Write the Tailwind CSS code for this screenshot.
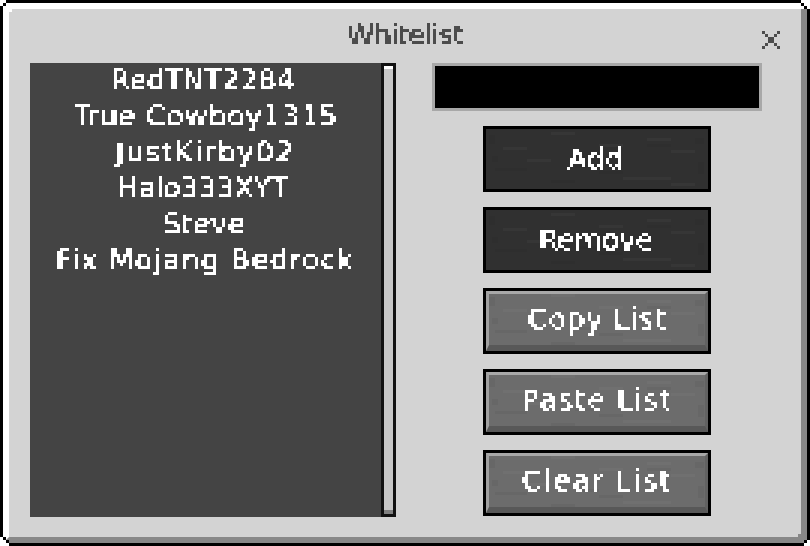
<!doctype html>
<html>
<head>
<meta charset="utf-8">
<script src="https://cdn.jsdelivr.net/npm/@tailwindcss/browser@4"></script>
</head>
<body class="bg-white overflow-hidden">
<!-- blocky 3px look for the text, stone texture for the buttons -->
<svg class="absolute w-0 h-0">
    <defs>
        <filter id="px" x="0" y="0" width="1" height="1" color-interpolation-filters="sRGB">
            <feFlood x="1" y="1" width="1" height="1" flood-color="#000"/>
            <feComposite width="3" height="3"/>
            <feTile result="grid"/>
            <feGaussianBlur in="SourceGraphic" stdDeviation="0.8" result="soft"/>
            <feComposite in="soft" in2="grid" operator="in"/>
            <feMorphology operator="dilate" radius="1"/>
            <feComponentTransfer>
                <feFuncA type="discrete" tableValues="0 0 1 1 1"/>
            </feComponentTransfer>
        </filter>
        <symbol id="stone" viewBox="0 0 222 60">
            <g fill="#fff" fill-opacity="0.03">
                <rect x="161" y="9" width="24" height="3"/>
                <rect x="41" y="30" width="24" height="3"/>
                <rect x="65" y="3" width="24" height="3"/>
                <rect x="137" y="48" width="48" height="3"/>
                <rect x="185" y="21" width="24" height="3"/>
                <rect x="113" y="15" width="24" height="3"/>
                <rect x="17" y="18" width="24" height="3"/>
                <rect x="185" y="54" width="24" height="3"/>
            </g>
            <g fill="#000" fill-opacity="0.04">
                <rect x="65" y="51" width="24" height="3"/>
                <rect x="9" y="39" width="32" height="3"/>
                <rect x="161" y="15" width="24" height="3"/>
                <rect x="89" y="36" width="24" height="3"/>
                <rect x="209" y="9" width="9" height="6"/>
                <rect x="212" y="33" width="6" height="12"/>
                <rect x="3" y="6" width="6" height="9"/>
                <rect x="6" y="27" width="6" height="6"/>
                <rect x="113" y="42" width="24" height="3"/>
            </g>
        </symbol>
    </defs>
</svg>

<div class="relative w-[810px] h-[546px] border-3 border-black font-['DejaVu_Sans',sans-serif]">
    <div class="flex flex-col w-full h-full border-t-6 border-l-6 border-t-white border-l-white border-b-6 border-r-6 border-b-[#888888] border-r-[#888888] bg-[#d3d3d3]">
        <div class="relative h-[54px] shrink-0">
            <h1 class="absolute left-[337px] top-[8px] text-[29px] leading-[36px] tracking-[-1.1px] text-[#4c4c4c] [filter:url(#px)]">Whitelist</h1>
            <svg class="absolute left-[753px] top-[22px]" width="18" height="18" viewBox="0 0 6 6" fill="#4c4c4c" shape-rendering="crispEdges">
                <path d="M0 0h1v1H0zM5 0h1v1H5zM1 1h1v1H1zM4 1h1v1H4zM2 2h2v2H2zM1 4h1v1H1zM4 4h1v1H4zM0 5h1v1H0zM5 5h1v1H5z"/>
            </svg>
        </div>

        <div class="flex pl-[21px]">
            <div class="flex w-[366px] h-[454px] bg-[#444444]">
                <ul class="flex-1 text-center text-white text-[29px] leading-[36px] -mt-px">
                    <li class="[filter:url(#px)] tracking-[-0.2px] pr-[6px]">RedTNT2284</li>
                    <li class="[filter:url(#px)] tracking-[0.3px]">True Cowboy1315</li>
                    <li class="[filter:url(#px)] tracking-[1.3px]">JustKirby02</li>
                    <li class="[filter:url(#px)] tracking-[-0.5px] pr-[6px]">Halo333XYT</li>
                    <li class="[filter:url(#px)] pr-[3px]">Steve</li>
                    <li class="[filter:url(#px)] tracking-[1px]">Fix Mojang Bedrock</li>
                </ul>
                <div class="flex flex-col w-[15px] h-full border-3 border-[#111111] bg-[#c6c6c6]">
                    <div class="h-[3px] bg-white"></div>
                    <div class="flex-1"></div>
                    <div class="h-[4px] bg-[#808080]"></div>
                </div>
            </div>

            <div class="flex flex-col items-center w-[330px] ml-[36px]">
                <div class="w-full h-[48px] border-3 border-[#a8a8a8] bg-black"></div>
                <div class="flex flex-col gap-[15px] mt-[15px]">
                    <button class="relative w-[228px] h-[66px] border-3 border-black text-[29px] text-white bg-[#303030]">
                        <svg class="absolute inset-0 w-full h-full" shape-rendering="crispEdges"><use href="#stone"/></svg>
                        <span class="relative block leading-[50px] pr-[3px] [filter:url(#px)]">Add</span>
                    </button>
                    <button class="relative w-[228px] h-[66px] border-3 border-black text-[29px] text-white bg-[#303030]">
                        <svg class="absolute inset-0 w-full h-full" shape-rendering="crispEdges"><use href="#stone"/></svg>
                        <span class="relative block leading-[50px] tracking-[-0.6px] pr-[3px] [filter:url(#px)]">Remove</span>
                    </button>
                    <button class="relative w-[228px] h-[66px] border-3 border-black text-[29px] text-white bg-[#6c6c6c]">
                        <svg class="absolute inset-0 w-full h-full" shape-rendering="crispEdges"><use href="#stone"/></svg>
                        <span class="relative block h-full border-t-3 border-l-3 border-r-3 border-b-6 border-t-[#a8a8a8] border-l-[#a0a0a0] border-r-[#626262] border-b-[#585858]">
                            <span class="block leading-[51px] tracking-[0.6px] [filter:url(#px)]">Copy List</span>
                        </span>
                    </button>
                    <button class="relative w-[228px] h-[66px] border-3 border-black text-[29px] text-white bg-[#6c6c6c]">
                        <svg class="absolute inset-0 w-full h-full" shape-rendering="crispEdges"><use href="#stone"/></svg>
                        <span class="relative block h-full border-t-3 border-l-3 border-r-3 border-b-6 border-t-[#a8a8a8] border-l-[#a0a0a0] border-r-[#626262] border-b-[#585858]">
                            <span class="block leading-[51px] tracking-[1.3px] [filter:url(#px)]">Paste List</span>
                        </span>
                    </button>
                    <button class="relative w-[228px] h-[66px] border-3 border-black text-[29px] text-white bg-[#6c6c6c]">
                        <svg class="absolute inset-0 w-full h-full" shape-rendering="crispEdges"><use href="#stone"/></svg>
                        <span class="relative block h-full border-t-3 border-l-3 border-r-3 border-b-6 border-t-[#a8a8a8] border-l-[#a0a0a0] border-r-[#626262] border-b-[#585858]">
                            <span class="block leading-[51px] tracking-[1.4px] [filter:url(#px)]">Clear List</span>
                        </span>
                    </button>
                </div>
            </div>
        </div>
    </div>

    <!-- stepped window corners -->
    <div class="absolute -left-[3px] -top-[3px] w-[6px] h-[3px] bg-white"></div>
    <div class="absolute -left-[3px] -top-[3px] w-[3px] h-[6px] bg-white"></div>
    <div class="absolute left-0 top-0 w-[3px] h-[3px] bg-black"></div>
    <div class="absolute left-[6px] top-[6px] w-[3px] h-[3px] bg-white"></div>

    <div class="absolute -right-[3px] -top-[3px] w-[9px] h-[3px] bg-white"></div>
    <div class="absolute -right-[3px] top-0 w-[6px] h-[3px] bg-white"></div>
    <div class="absolute -right-[3px] top-[3px] w-[3px] h-[3px] bg-white"></div>
    <div class="absolute right-[3px] top-0 w-[3px] h-[3px] bg-black"></div>
    <div class="absolute right-0 top-[3px] w-[3px] h-[3px] bg-black"></div>
    <div class="absolute right-[3px] top-[3px] w-[3px] h-[3px] bg-white"></div>

    <div class="absolute -left-[3px] -bottom-[3px] w-[9px] h-[3px] bg-white"></div>
    <div class="absolute -left-[3px] bottom-0 w-[6px] h-[3px] bg-white"></div>
    <div class="absolute -left-[3px] bottom-[3px] w-[3px] h-[3px] bg-white"></div>
    <div class="absolute left-[3px] bottom-0 w-[3px] h-[3px] bg-black"></div>
    <div class="absolute left-0 bottom-[3px] w-[3px] h-[3px] bg-black"></div>

    <div class="absolute -right-[3px] -bottom-[3px] w-[6px] h-[3px] bg-white"></div>
    <div class="absolute -right-[3px] -bottom-[3px] w-[3px] h-[6px] bg-white"></div>
    <div class="absolute right-0 bottom-0 w-[3px] h-[3px] bg-black"></div>
    <div class="absolute right-[6px] bottom-[6px] w-[3px] h-[3px] bg-[#888888]"></div>
</div>
</body>
</html>
